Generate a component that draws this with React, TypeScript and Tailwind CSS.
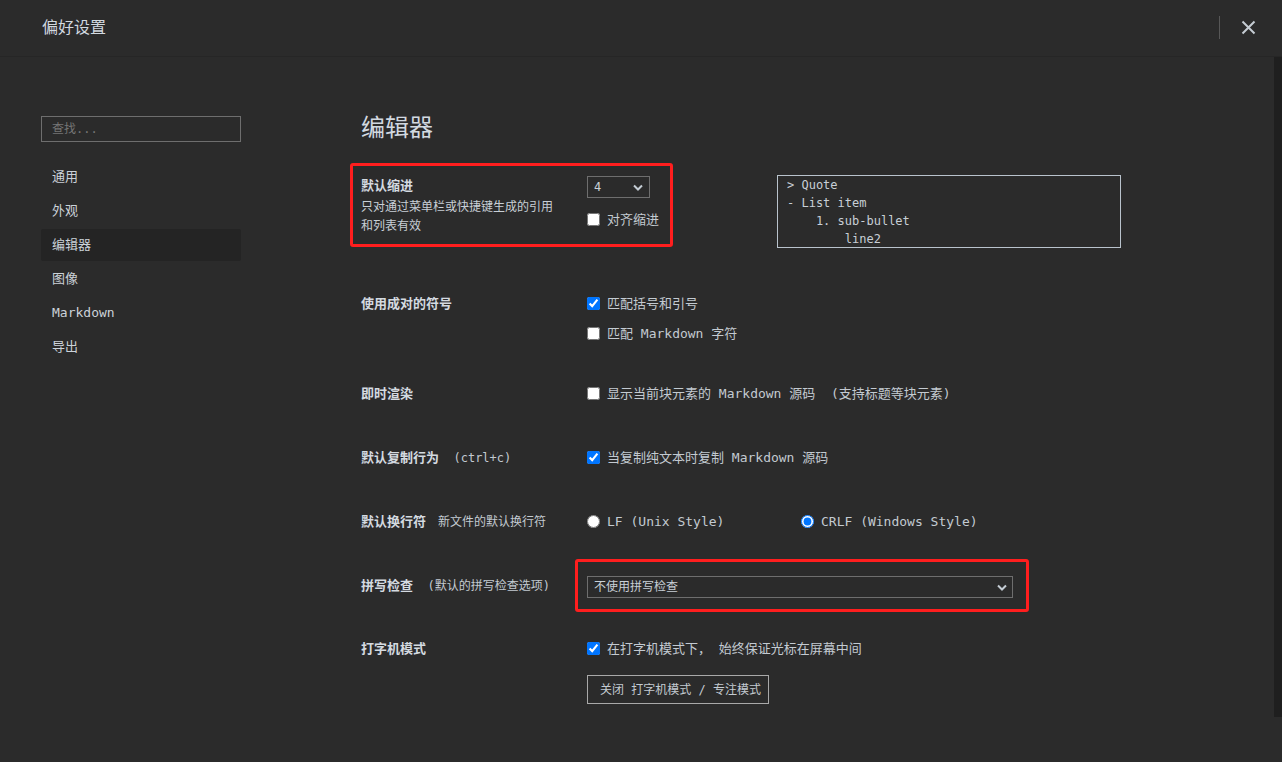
import React from "react";

const Chevron = ({ className = "" }: { className?: string }) => (
  <svg width="10" height="7" viewBox="0 0 10 7" className={className}>
    <path d="M1 1.5 L5 5.5 L9 1.5" fill="none" stroke="#c4ccd4" strokeWidth="2" />
  </svg>
);

const Check = ({ label, checked = false }: { label: React.ReactNode; checked?: boolean }) => (
  <label className="flex items-center h-[19px] gap-[7px] text-[13px] leading-[19px] text-[#c3cad1]">
    <input type="checkbox" defaultChecked={checked} className="m-0 w-[13px] h-[13px] accent-[#0075ff]" />
    <span className="whitespace-pre">{label}</span>
  </label>
);

const Radio = ({ label, checked = false }: { label: string; checked?: boolean }) => (
  <label className="flex items-center h-[19px] gap-[7px] text-[13px] leading-[19px] text-[#c3cad1] w-[214px]">
    <input type="radio" name="eol" defaultChecked={checked} className="m-0 w-[13px] h-[13px] accent-[#0075ff]" />
    <span className="whitespace-pre">{label}</span>
  </label>
);

export default function App() {
  const nav = ["通用", "外观", "编辑器", "图像", "Markdown", "导出"];
  return (
    <div className="relative w-[1282px] h-[762px] overflow-hidden bg-[#2b2b2b] text-[#cfd6dd] font-['DejaVu_Sans_Mono','Noto_Sans_CJK_SC',monospace]">
      {/* header */}
      <div className="h-[57px] border-b border-[#262626] flex items-center pl-[42px] pr-[26px]">
        <div className="text-[16px] leading-[22px] text-[#d2d9e0]">偏好设置</div>
        <div className="flex-1" />
        <div className="w-px h-[23px] bg-[#575757] -mt-[2px]" />
        <div className="ml-[21px] -mt-[2px]">
          <svg width="15" height="15" viewBox="0 0 15 15">
            <path d="M1.5 1.5 L13.5 13.5 M13.5 1.5 L1.5 13.5" stroke="#c5ccd3" strokeWidth="2" />
          </svg>
        </div>
      </div>

      {/* scrollbar */}
      <div className="absolute right-0 top-[57px] w-[8px] h-[660px] bg-[#1f1f1f]" />

      <div className="flex">
        {/* sidebar */}
        <div className="ml-[41px] w-[200px] pt-[59px]">
          <div className="h-[26px] border border-[#6e6e6e] flex items-center pl-[10px] text-[12px] text-[#757575]">
            查找...
          </div>
          <div className="mt-[19px] flex flex-col gap-[2px]">
            {nav.map((n) => (
              <div
                key={n}
                className={`h-[32px] flex items-center pl-[11px] text-[13px] rounded-[2px] text-[#cbd2d9] ${
                  n === "编辑器" ? "bg-[#242424]" : ""
                }`}
              >
                {n}
              </div>
            ))}
          </div>
        </div>

        {/* main */}
        <div className="ml-[120px] pt-[55px] flex-1">
          <div className="text-[24px] leading-[32px] text-[#d2d9e0]">编辑器</div>

          <div className="flex items-start -ml-[11px] mt-[19px]">
            <div className="w-[323px] h-[84px] border-[3px] border-[#ff1e1e] rounded-[3px] flex pl-[8px] pt-[10px]">
              <div className="w-[226px]">
                <div className="text-[13px] leading-[19px] font-bold text-[#d4dae0]">默认缩进</div>
                <div className="mt-[3px] text-[12px] leading-[19px] text-[#c8cfd6]">
                  只对通过菜单栏或快捷键生成的引用
                  <br />
                  和列表有效
                </div>
              </div>
              <div className="flex flex-col">
                <div className="w-[63px] h-[22px] border border-[#6e6e6e] flex items-center justify-between pl-[6px] pr-[6px] text-[12px] text-[#c8cfd6]">
                  <span>4</span>
                  <Chevron />
                </div>
                <div className="mt-[12px]">
                  <Check label="对齐缩进" />
                </div>
              </div>
            </div>
            <div className="ml-[104px] mt-[12px] w-[344px] h-[73px] border border-[#b9c3cc] pl-[9px] text-[12px] leading-[18px] text-[#c8cfd6] whitespace-pre">
              {"> Quote\n- List item\n    1. sub-bullet\n        line2"}
            </div>
          </div>

          {/* rows */}
          <div className="mt-[46px]">
            <div className="flex h-[90px]">
              <div className="w-[226px] text-[13px] leading-[19px] font-bold text-[#d4dae0]">使用成对的符号</div>
              <div className="flex flex-col gap-[11px]">
                <Check label="匹配括号和引号" checked />
                <Check label="匹配 Markdown 字符" />
              </div>
            </div>

            <div className="flex h-[64px]">
              <div className="w-[226px] text-[13px] leading-[19px] font-bold text-[#d4dae0]">即时渲染</div>
              <Check label="显示当前块元素的 Markdown 源码  (支持标题等块元素)" />
            </div>

            <div className="flex h-[64px]">
              <div className="w-[226px] text-[13px] leading-[19px] text-[#d4dae0] whitespace-pre">
                <span className="font-bold">默认复制行为</span>
                <span className="text-[12px] text-[#c3cad1]">  (ctrl+c)</span>
              </div>
              <Check label="当复制纯文本时复制 Markdown 源码" checked />
            </div>

            <div className="flex h-[64px]">
              <div className="w-[226px] text-[13px] leading-[19px] text-[#d4dae0]">
                <span className="font-bold">默认换行符</span>
                <span className="ml-[12px] text-[12px] text-[#c3cad1]">新文件的默认换行符</span>
              </div>
              <div className="flex">
                <Radio label="LF (Unix Style)" />
                <Radio label="CRLF (Windows Style)" checked />
              </div>
            </div>

            <div className="flex h-[63px]">
              <div className="w-[226px] text-[13px] leading-[19px] text-[#d4dae0] whitespace-pre">
                <span className="font-bold">拼写检查</span>
                <span className="text-[12px] text-[#c3cad1]">  (默认的拼写检查选项)</span>
              </div>
              <div className="-ml-[12px] -mt-[17px] w-[454px] h-[53px] border-[3px] border-[#ff1e1e] rounded-[3px] pl-[9px] pt-[14px]">
                <div className="w-[426px] h-[22px] border border-[#6e6e6e] flex items-center justify-between pl-[6px] pr-[5px] text-[12px] text-[#c8cfd6]">
                  <span>不使用拼写检查</span>
                  <Chevron />
                </div>
              </div>
            </div>

            <div className="flex">
              <div className="w-[226px] text-[13px] leading-[19px] font-bold text-[#d4dae0]">打字机模式</div>
              <div className="flex flex-col items-start">
                <Check label="在打字机模式下， 始终保证光标在屏幕中间" checked />
                <div className="mt-[17px] w-[182px] h-[29px] border border-[#a9a9a9] flex items-center pl-[12px] text-[12px] text-[#c3cad1] whitespace-pre">
                  关闭 打字机模式 / 专注模式
                </div>
              </div>
            </div>
          </div>
        </div>
      </div>
    </div>
  );
}
